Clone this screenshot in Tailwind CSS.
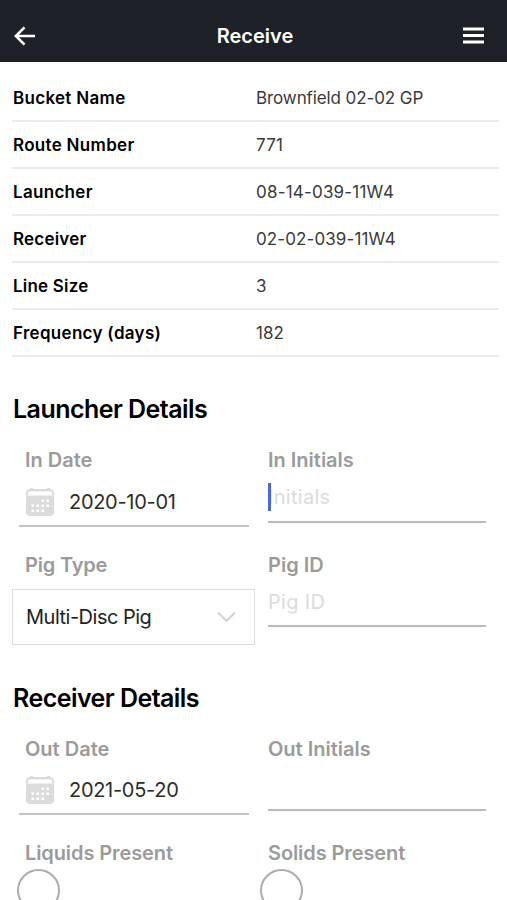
<!DOCTYPE html>
<html lang="en">
<head>
<meta charset="utf-8">
<title>Receive</title>
<script src="https://cdn.jsdelivr.net/npm/@tailwindcss/browser@4"></script>
</head>
<body class="bg-white text-black font-['Inter','Liberation_Sans',sans-serif] w-[507px] h-[900px] overflow-hidden">
<svg class="hidden">
  <symbol id="calendar" viewBox="0 0 28 28">
    <path fill="#dcdcdc" fill-rule="evenodd" d="M4 0h3v1h14V0h3v1a4 4 0 0 1 4 4v19a4 4 0 0 1-4 4H4a4 4 0 0 1-4-4V5a4 4 0 0 1 4-4zM3 3.500a1 1 0 0 0-1 1v3h24v-3a1 1 0 0 0-1-1z"/>
    <path fill="#fff" d="M15.500 11.500h2.500v2.500h-2.500zM20.500 11.500h2.500v2.500h-2.500zM5.500 16.500h2.500v2.500H5.500zM10.500 16.500h2.500v2.500h-2.500zM15.500 16.500h2.500v2.500h-2.500zM20.500 16.500h2.500v2.500h-2.500zM5.500 21.500h2.500v2.500H5.500zM10.500 21.500h2.500v2.500h-2.500zM15.500 21.500h2.500v2.500h-2.500z"/>
  </symbol>
</svg>
<header class="h-[62px] bg-[#1f2128] text-white flex items-center justify-between pl-[14px] pr-[23px] pt-[9px]">
  <svg class="w-[22px] h-5" viewBox="0 0 22 20" fill="none" stroke="#fff" stroke-width="2.600"><path d="M21 10H2M10.500 1.300 1.800 10l8.700 8.700"/></svg>
  <h1 class="text-[20px] font-semibold leading-6 ml-[11px]">Receive</h1>
  <svg class="w-[21px] h-[17px]" viewBox="0 0 21 17" fill="#fff"><path d="M0 .500h21v3H0zM0 7h21v3H0zM0 13.500h21v3H0z"/></svg>
</header>
<main>
  <dl class="pt-[13px] ml-[12px] w-[487px] text-[17px] leading-6">
    <div class="h-[47px] flex items-center border-b-2 border-[#ebebeb]"><dt class="w-[244px] pl-px font-semibold tracking-[0.3px]">Bucket Name</dt><dd class="text-[#3a3a3a] tracking-[-0.1px]">Brownfield 02-02 GP</dd></div>
    <div class="h-[47px] flex items-center border-b-2 border-[#ebebeb]"><dt class="w-[244px] pl-px font-semibold tracking-[0.3px]">Route Number</dt><dd class="text-[#3a3a3a] tracking-[0.2px]">771</dd></div>
    <div class="h-[47px] flex items-center border-b-2 border-[#ebebeb]"><dt class="w-[244px] pl-px font-semibold tracking-[0.3px]">Launcher</dt><dd class="text-[#3a3a3a] tracking-[0.2px]">08-14-039-11W4</dd></div>
    <div class="h-[47px] flex items-center border-b-2 border-[#ebebeb]"><dt class="w-[244px] pl-px font-semibold tracking-[0.2px]">Receiver</dt><dd class="text-[#3a3a3a] tracking-[0.1px]">02-02-039-11W4</dd></div>
    <div class="h-[47px] flex items-center border-b-2 border-[#ebebeb]"><dt class="w-[244px] pl-px font-semibold tracking-[0.2px]">Line Size</dt><dd class="text-[#3a3a3a]">3</dd></div>
    <div class="h-[47px] flex items-center border-b-2 border-[#ebebeb]"><dt class="w-[244px] pl-px font-semibold tracking-[0.3px]">Frequency (days)</dt><dd class="text-[#3a3a3a]">182</dd></div>
  </dl>

  <section class="pt-[36px] h-[288px]">
    <h2 class="pl-[13px] text-[25px] leading-8 font-semibold tracking-[-0.55px]">Launcher Details</h2>
    <div class="grid grid-cols-[243px_218px] gap-x-[12px] pl-[13px] pt-[23px] text-[20px] leading-6">
      <div class="h-[105px]">
        <div class="pl-[12px] text-[#9b9b9b] font-semibold">In Date</div>
        <div class="ml-[6px] w-[230px] h-[55px] pt-[7px] pl-[7px] flex items-center gap-[15px] border-b-2 border-[#c4c4c4] text-[#2c2c2c] tracking-[-0.3px]"><svg class="w-7 h-7"><use href="#calendar"/></svg><span>2020-10-01</span></div>
      </div>
      <div class="h-[105px]">
        <div class="text-[#9b9b9b] font-semibold">In Initials</div>
        <div class="relative h-[51px] pt-[13px] border-b-2 border-[#b9bcbc] text-[#dcdcdc] tracking-[0.3px]">Initials<span class="absolute left-0 top-[11px] w-[3px] h-7 bg-[#4c68d7]"></span></div>
      </div>
      <div>
        <div class="pl-[12px] text-[#9b9b9b] font-semibold tracking-[-0.2px]">Pig Type</div>
        <div class="-ml-px mt-[12px] h-[56px] w-[243px] border border-[#dedede] flex items-center justify-between pl-[13px] pr-[18px] text-[#222] tracking-[-0.5px]"><span>Multi-Disc Pig</span><svg class="w-[19px] h-[12px]" viewBox="0 0 19 12" fill="none" stroke="#d4d4d4" stroke-width="2.200"><path d="M1 1.500 9.500 10 18 1.500"/></svg></div>
      </div>
      <div>
        <div class="text-[#9b9b9b] font-semibold">Pig ID</div>
        <div class="h-[50px] pt-[13px] border-b-2 border-[#b9bcbc] text-[#dcdcdc] tracking-[0.3px]">Pig ID</div>
      </div>
    </div>
  </section>

  <section class="pt-[37px]">
    <h2 class="pl-[13px] text-[25px] leading-8 font-semibold tracking-[-0.55px]">Receiver Details</h2>
    <div class="grid grid-cols-[243px_218px] gap-x-[12px] pl-[13px] pt-[23px] text-[20px] leading-6">
      <div class="h-[104px]">
        <div class="pl-[12px] text-[#9b9b9b] font-semibold">Out Date</div>
        <div class="ml-[6px] w-[230px] h-[54px] pt-[6px] pl-[7px] flex items-center gap-[15px] border-b-2 border-[#c4c4c4] text-[#2c2c2c] tracking-[-0.3px]"><svg class="w-7 h-7"><use href="#calendar"/></svg><span>2021-05-20</span></div>
      </div>
      <div class="h-[104px]">
        <div class="text-[#9b9b9b] font-semibold">Out Initials</div>
        <div class="h-[50px] border-b-2 border-[#b9bcbc]"></div>
      </div>
      <div>
        <div class="pl-[12px] text-[#9b9b9b] font-semibold tracking-[-0.1px]">Liquids Present</div>
        <div class="ml-[4px] mt-[4px] size-[43px] rounded-full border-2 border-[#adadad]"></div>
      </div>
      <div>
        <div class="text-[#9b9b9b] font-semibold tracking-[-0.1px]">Solids Present</div>
        <div class="ml-[-8px] mt-[4px] size-[43px] rounded-full border-2 border-[#adadad]"></div>
      </div>
    </div>
  </section>
</main>
</body>
</html>
